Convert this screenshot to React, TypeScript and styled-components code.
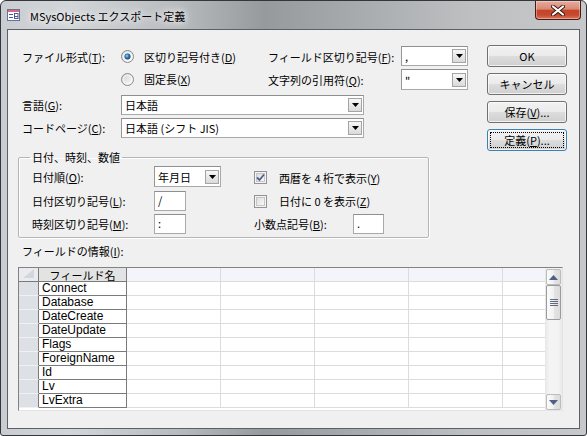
import React from "react";
import styled, { createGlobalStyle } from "styled-components";

const uiFont = `"Noto Sans CJK JP", "Liberation Sans", sans-serif`;

const GlobalStyle = createGlobalStyle`
  html, body {
    margin: 0;
    padding: 0;
    background: #ffffff;
  }
  body {
    font-family: ${uiFont};
    font-size: 11px;
    color: #000;
  }
  * {
    box-sizing: border-box;
  }
`;

const Window = styled.div`
  width: 587px;
  height: 436px;
  display: flex;
  flex-direction: column;
  border: 1px solid #33373b;
  border-radius: 6px 6px 3px 3px;
  overflow: hidden;
  background: linear-gradient(
    90deg,
    #c9cdd1 0%,
    #d3d6d9 12%,
    #b9bcbf 30%,
    #979a9d 45%,
    #a9acaf 62%,
    #bdbfc1 80%,
    #c6c8ca 100%
  );
`;

const TitleBar = styled.div`
  height: 28px;
  display: flex;
  align-items: flex-start;
  padding-left: 6px;
`;

const TitleIcon = styled.svg`
  margin-top: 8px;
  flex: none;
`;

const TitleText = styled.div`
  margin: 8px 0 0 10px;
  line-height: 15px;
  font-size: 11px;
  color: #000;
  text-shadow: 0 0 6px #fff, 0 0 10px rgba(255, 255, 255, 0.9);
`;

const CloseButton = styled.div`
  margin-left: auto;
  margin-right: 5px;
  width: 46px;
  height: 19px;
  border: 1px solid #4a1a12;
  border-top: none;
  border-radius: 0 0 4px 4px;
  background: linear-gradient(
    #e8ab9d 0%,
    #db8875 45%,
    #c5442a 52%,
    #c44a30 78%,
    #d9775c 100%
  );
  box-shadow: inset 0 0 0 1px rgba(255, 255, 255, 0.35);
  display: flex;
  align-items: center;
  justify-content: center;
`;

const Client = styled.div`
  flex: 1;
  margin: 0 6px 6px 6px;
  border: 1px solid #596066;
  background: #f0f0f0;
  display: flex;
  flex-direction: column;
`;

const TopSection = styled.div`
  display: flex;
  justify-content: space-between;
  align-items: flex-start;
  padding: 15px 12px 0 14px;
`;

const FormGrid = styled.div`
  margin-top: 1px;
  display: grid;
  grid-template-columns: 99px 147px 133px 67px;
  grid-template-rows: 23px 26px 23px 20px;
`;

const Cell = styled.div<{ $col?: string; $h?: number }>`
  grid-column: ${(p) => p.$col ?? "auto"};
  height: ${(p) => p.$h ?? 20}px;
  display: flex;
  align-items: center;
  white-space: nowrap;
  line-height: 14px;
`;

const Key = styled.span`
  text-decoration: underline;
  text-underline-offset: 1px;
`;

const Option = styled.label`
  display: flex;
  align-items: center;
  gap: 10px;
  white-space: nowrap;
`;

const CheckOption = styled.label`
  display: flex;
  align-items: center;
  gap: 12px;
  white-space: nowrap;
`;

const ComboBox = styled.div<{ $w: number; $h?: number }>`
  width: ${(p) => p.$w}px;
  height: ${(p) => p.$h ?? 20}px;
  background: #fff;
  border: 1px solid #a9a9a9;
  border-top-color: #8f8f8f;
  border-left-color: #979797;
  display: flex;
  align-items: center;
  justify-content: space-between;
  padding: 0 1px 0 3px;
`;

const ComboText = styled.span`
  line-height: 14px;
  white-space: nowrap;
`;

const DropButton = styled.span`
  width: 14px;
  height: 14px;
  border: 1px solid #a4a4a4;
  background: linear-gradient(#f7f7f7, #dadada);
  display: flex;
  align-items: center;
  justify-content: center;
`;

const TextBox = styled.div<{ $w: number }>`
  width: ${(p) => p.$w}px;
  height: 20px;
  background: #fff;
  border: 1px solid #a9a9a9;
  border-top-color: #8f8f8f;
  padding: 1px 3px;
  line-height: 14px;
`;

const ButtonColumn = styled.div`
  display: flex;
  flex-direction: column;
  gap: 6px;
`;

const PushButton = styled.div<{ $default?: boolean }>`
  width: 80px;
  height: 22px;
  border: 1px solid ${(p) => (p.$default ? "#3c7fb1" : "#707070")};
  border-radius: 3px;
  background: linear-gradient(#f2f2f2 0%, #ebebeb 48%, #dddddd 52%, #cfcfcf 100%);
  box-shadow: inset 0 0 0 1px rgba(255, 255, 255, 0.7);
  display: flex;
  align-items: center;
  justify-content: center;
  line-height: 14px;
  outline: ${(p) => (p.$default ? "1px dotted #000" : "none")};
  outline-offset: -4px;
`;

const GroupBox = styled.fieldset`
  margin: 0 0 0 10px;
  width: 411px;
  min-width: 0;
  padding: 2px 0 3px 13px;
  border: 1px solid #b5b5b5;
  border-radius: 2px;
  box-shadow: 1px 1px 0 #fff, inset 1px 1px 0 #fff;
`;

const GroupTitle = styled.legend`
  margin-left: -2px;
  padding: 0 2px;
  line-height: 13px;
  font-size: 11px;
`;

const GroupGrid = styled.div`
  display: grid;
  grid-template-columns: 122px 100px 99px 40px;
  grid-template-rows: 25px 23px 20px;
`;

const SectionLabel = styled.div`
  margin: 6px 0 0 14px;
  line-height: 14px;
`;

const DataGrid = styled.div`
  margin: 9px 0 0 10px;
  width: 545px;
  height: 144px;
  border: 1px solid;
  border-color: #828282 #e4e4e4 #e4e4e4 #828282;
  background: #fff;
  display: flex;
`;

const Sheet = styled.div`
  flex: 1;
  display: grid;
  grid-template-columns: 20px 88px 94px 94px 94px 94px 1fr;
  grid-auto-rows: 14px;
  align-content: start;
  overflow: hidden;
`;

const Corner = styled.div`
  background: #e9ebee;
  border-right: 1px solid #7a7a7a;
  border-bottom: 1px solid #7a7a7a;
  display: flex;
  align-items: flex-start;
  padding: 1px 0 0 4px;
`;

const HeadName = styled.div`
  background: #e3e3e3;
  border-right: 1px solid #7a7a7a;
  border-bottom: 1px solid #7a7a7a;
  display: flex;
  align-items: center;
  justify-content: center;
  line-height: 12px;
  font-size: 11px;
  white-space: nowrap;
`;

const HeadBlank = styled.div<{ $last?: boolean }>`
  background: #f4f5fb;
  border-right: ${(p) => (p.$last ? "none" : "1px solid #dcdcdc")};
  border-bottom: 1px solid #dcdcdc;
`;

const Selector = styled.div`
  background: #dde1e6;
  border-right: 1px solid #7a7a7a;
  border-bottom: 1px solid #f0f1f3;
`;

const NameCell = styled.div`
  border-right: 1px solid #7a7a7a;
  border-bottom: 1px solid #7a7a7a;
  padding-left: 3px;
  font-family: "Liberation Sans", "Noto Sans CJK JP", sans-serif;
  font-size: 12px;
  line-height: 13px;
  color: #000;
  white-space: nowrap;
`;

const BlankCell = styled.div<{ $last?: boolean }>`
  border-right: ${(p) => (p.$last ? "none" : "1px solid #dcdcdc")};
  border-bottom: 1px solid #dcdcdc;
`;

const ScrollBar = styled.div`
  width: 17px;
  display: flex;
  flex-direction: column;
  padding: 1px 1px 0 1px;
  background: linear-gradient(90deg, #e6e6e6 0%, #f4f4f4 25%, #f4f4f4 75%, #eaeaea 100%);
`;

const ScrollButton = styled.div`
  height: 16px;
  border: 1px solid #bcbcbc;
  border-radius: 2px;
  background: linear-gradient(90deg, #fbfbfb 0%, #f1f1f1 50%, #e4e4e4 51%, #dcdcdc 100%);
  display: flex;
  align-items: center;
  justify-content: center;
`;

const Thumb = styled(ScrollButton)`
  height: 35px;
  border-color: #9b9b9b;
`;

const Track = styled.div`
  flex: 1;
`;

const fields = [
  "Connect",
  "Database",
  "DateCreate",
  "DateUpdate",
  "Flags",
  "ForeignName",
  "Id",
  "Lv",
  "LvExtra",
];

const DownTriangle = () => (
  <svg width="7" height="4" viewBox="0 0 7 4">
    <polygon points="0,0 7,0 3.5,4" fill="#000" />
  </svg>
);

const ArrowIcon = ({ up }: { up?: boolean }) => (
  <svg width="9" height="5" viewBox="0 0 9 5">
    <polygon points={up ? "0,5 9,5 4.5,0" : "0,0 9,0 4.5,5"} fill="#4d6185" />
  </svg>
);

const Radio = ({ checked, id }: { checked?: boolean; id: string }) => (
  <svg width="13" height="13" viewBox="0 0 13 13">
    <defs>
      <linearGradient id={`rb-${id}`} x1="0" y1="0" x2="1" y2="1">
        <stop offset="0" stopColor="#d2d2d2" />
        <stop offset="1" stopColor="#fbfbfb" />
      </linearGradient>
      <radialGradient id={`rd-${id}`} cx="0.4" cy="0.4" r="0.7">
        <stop offset="0" stopColor="#a9d7f5" />
        <stop offset="0.45" stopColor="#2c73b4" />
        <stop offset="1" stopColor="#0e3f73" />
      </radialGradient>
    </defs>
    <circle cx="6.5" cy="6.5" r="6" fill={`url(#rb-${id})`} stroke="#8b8b8b" />
    <circle cx="6.5" cy="6.5" r="4.3" fill="none" stroke="#ffffff" strokeOpacity="0.7" />
    {checked && <circle cx="6.5" cy="6.5" r="3" fill={`url(#rd-${id})`} />}
  </svg>
);

const CheckBox = ({ checked, id }: { checked?: boolean; id: string }) => (
  <svg width="13" height="13" viewBox="0 0 13 13">
    <defs>
      <linearGradient id={`cb-${id}`} x1="0" y1="0" x2="1" y2="1">
        <stop offset="0" stopColor="#dcdcdc" />
        <stop offset="1" stopColor="#fafafa" />
      </linearGradient>
    </defs>
    <rect x="0.5" y="0.5" width="12" height="12" fill="#f4f4f4" stroke="#939393" />
    <rect x="2.5" y="2.5" width="8" height="8" fill={`url(#cb-${id})`} stroke="#c6c6c6" />
    {checked && (
      <polyline
        points="3,6.5 5.5,9 10,3.5"
        fill="none"
        stroke="#4c5f90"
        strokeWidth="1.8"
      />
    )}
  </svg>
);

const Combo = ({ w, h, text }: { w: number; h?: number; text: string }) => (
  <ComboBox $w={w} $h={h}>
    <ComboText>{text}</ComboText>
    <DropButton>
      <DownTriangle />
    </DropButton>
  </ComboBox>
);

const App = () => {
  return (
    <>
      <GlobalStyle />
      <Window>
        <TitleBar>
          <TitleIcon width="13" height="12" viewBox="0 0 13 12">
            <rect x="0.5" y="0.5" width="12" height="11" fill="#ffffff" stroke="#6b6f96" />
            <rect x="1" y="1" width="11" height="2" fill="#d7687f" />
            <rect x="2" y="5" width="4" height="1" fill="#4a5a9a" />
            <rect x="2" y="8" width="4" height="1" fill="#4a5a9a" />
            <rect x="7.5" y="4.5" width="3.5" height="5" fill="none" stroke="#4a5a9a" />
            <rect x="8" y="7" width="3" height="1" fill="#4a5a9a" />
          </TitleIcon>
          <TitleText>MSysObjects エクスポート定義</TitleText>
          <CloseButton>
            <svg width="14" height="11" viewBox="0 0 14 11">
              <path d="M2 1.5 L12 9.5 M12 1.5 L2 9.5" stroke="#3a1810" strokeWidth="4" strokeLinecap="round" />
              <path d="M2 1.5 L12 9.5 M12 1.5 L2 9.5" stroke="#ffffff" strokeWidth="2.2" strokeLinecap="round" />
            </svg>
          </CloseButton>
        </TitleBar>

        <Client>
          <TopSection>
            <FormGrid>
              <Cell $h={21}>
                ファイル形式(<Key>T</Key>):
              </Cell>
              <Cell $h={21}>
                <Option>
                  <Radio checked id="delim" />
                  <span>
                    区切り記号付き(<Key>D</Key>)
                  </span>
                </Option>
              </Cell>
              <Cell $h={21}>
                フィールド区切り記号(<Key>F</Key>):
              </Cell>
              <Cell $h={20}>
                <Combo w={67} text="," />
              </Cell>

              <Cell $col="2" $h={20}>
                <Option>
                  <Radio id="fixed" />
                  <span>
                    固定長(<Key>X</Key>)
                  </span>
                </Option>
              </Cell>
              <Cell $h={21}>
                文字列の引用符(<Key>Q</Key>):
              </Cell>
              <Cell $h={21}>
                <Combo w={67} h={21} text={'"'} />
              </Cell>

              <Cell>
                言語(<Key>G</Key>):
              </Cell>
              <Cell $col="2 / 5">
                <Combo w={243} text="日本語" />
              </Cell>

              <Cell>
                コードページ(<Key>C</Key>):
              </Cell>
              <Cell $col="2 / 5">
                <Combo w={243} text="日本語 (シフト JIS)" />
              </Cell>
            </FormGrid>

            <ButtonColumn>
              <PushButton>OK</PushButton>
              <PushButton>キャンセル</PushButton>
              <PushButton>
                保存(<Key>V</Key>)...
              </PushButton>
              <PushButton $default>
                定義(<Key>P</Key>)...
              </PushButton>
            </ButtonColumn>
          </TopSection>

          <GroupBox>
            <GroupTitle>日付、時刻、数値</GroupTitle>
            <GroupGrid>
              <Cell $h={21}>
                日付順(<Key>O</Key>):
              </Cell>
              <Cell $h={21}>
                <Combo w={67} h={21} text="年月日" />
              </Cell>
              <Cell $col="3 / 5" $h={23}>
                <CheckOption>
                  <CheckBox checked id="year4" />
                  <span>
                    西暦を 4 桁で表示(<Key>Y</Key>)
                  </span>
                </CheckOption>
              </Cell>

              <Cell>
                日付区切り記号(<Key>L</Key>):
              </Cell>
              <Cell>
                <TextBox $w={32}>/</TextBox>
              </Cell>
              <Cell $col="3 / 5">
                <CheckOption>
                  <CheckBox id="zero" />
                  <span>
                    日付に 0 を表示(<Key>Z</Key>)
                  </span>
                </CheckOption>
              </Cell>

              <Cell>
                時刻区切り記号(<Key>M</Key>):
              </Cell>
              <Cell>
                <TextBox $w={32}>:</TextBox>
              </Cell>
              <Cell>
                小数点記号(<Key>B</Key>):
              </Cell>
              <Cell>
                <TextBox $w={31}>.</TextBox>
              </Cell>
            </GroupGrid>
          </GroupBox>

          <SectionLabel>
            フィールドの情報(<Key>I</Key>):
          </SectionLabel>

          <DataGrid>
            <Sheet>
              <Corner>
                <svg width="11" height="9" viewBox="0 0 11 9">
                  <polygon points="11,0 11,9 0,9" fill="#d3d6da" />
                </svg>
              </Corner>
              <HeadName>フィールド名</HeadName>
              <HeadBlank />
              <HeadBlank />
              <HeadBlank />
              <HeadBlank />
              <HeadBlank $last />
              {fields.map((f) => (
                <React.Fragment key={f}>
                  <Selector />
                  <NameCell>{f}</NameCell>
                  <BlankCell />
                  <BlankCell />
                  <BlankCell />
                  <BlankCell />
                  <BlankCell $last />
                </React.Fragment>
              ))}
            </Sheet>
            <ScrollBar>
              <ScrollButton>
                <ArrowIcon up />
              </ScrollButton>
              <Thumb>
                <svg width="8" height="7" viewBox="0 0 8 7">
                  <rect x="0" y="0" width="8" height="1" fill="#5e6a80" />
                  <rect x="0" y="2" width="8" height="1" fill="#5e6a80" />
                  <rect x="0" y="4" width="8" height="1" fill="#5e6a80" />
                  <rect x="0" y="6" width="8" height="1" fill="#5e6a80" />
                </svg>
              </Thumb>
              <Track />
              <ScrollButton>
                <ArrowIcon />
              </ScrollButton>
            </ScrollBar>
          </DataGrid>
        </Client>
      </Window>
    </>
  );
};

export default App;
